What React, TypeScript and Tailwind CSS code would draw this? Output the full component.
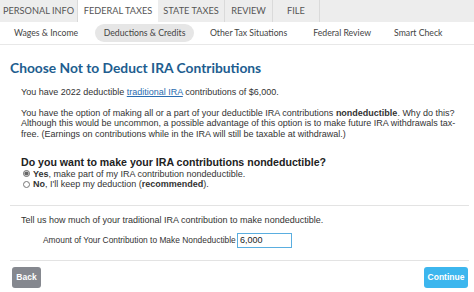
import { useState } from 'react';

const tabs = [
  { label: 'PERSONAL INFO', w: 'w-[78px]' },
  { label: 'FEDERAL TAXES', w: 'w-[80px]' },
  { label: 'STATE TAXES', w: 'w-[67px]' },
  { label: 'REVIEW', w: 'w-[48px]' },
  { label: 'FILE', w: 'w-[47px]' },
];

const subTabs = [
  { label: 'Wages & Income', cls: '' },
  { label: 'Deductions & Credits', cls: 'ml-[17px] bg-[#e6e6e6] rounded-full px-[8.5px] py-[2px]' },
  { label: 'Other Tax Situations', cls: 'ml-[16px]' },
  { label: 'Federal Review', cls: 'ml-[26px]' },
  { label: 'Smart Check', cls: 'ml-[23px]' },
];

export default function App() {
  const [choice, setChoice] = useState<'yes' | 'no'>('yes');
  const [amount, setAmount] = useState('6,000');

  return (
    <div className="w-[474px] h-[292px] bg-white overflow-hidden font-['Liberation_Sans',Arial,sans-serif] text-[#333]">
      {/* Top tabs */}
      <div className="flex h-[22px] bg-[#ededed] font-['Lato',sans-serif] text-[9.2px] text-[#555]">
        {tabs.map((tab) => (
          <div
            key={tab.label}
            className={
              tab.label === 'FEDERAL TAXES'
                ? `${tab.w} flex items-center justify-center bg-white h-[22px]`
                : `${tab.w} flex items-center justify-center border-r border-[#dadada]`
            }
          >
            {tab.label}
          </div>
        ))}
      </div>

      {/* Sub nav */}
      <div className="flex items-center h-[23px] pl-[14px] border-b border-[#e8e8e8] font-['Lato',sans-serif] text-[8.7px] text-[#444]">
        {subTabs.map((s) => (
          <span key={s.label} className={s.cls}>
            {s.label}
          </span>
        ))}
      </div>

      <div className="pl-[10px] pr-[5px] pt-[15px]">
        <h1 className="font-['Lato',sans-serif] font-bold text-[13.8px] leading-[16px] text-[#215d8f]">
          Choose Not to Deduct IRA Contributions
        </h1>

        <div className="pl-[11px] text-[9px]">
          <p className="mt-[10.5px] leading-[11px]">
            You have 2022 deductible <a className="text-[#2a6cb0] underline">traditional IRA</a> contributions of $6,000.
          </p>
          <p className="mt-[10.25px] leading-[10.5px]">
            You have the option of making all or a part of your deductible IRA contributions <b>nondeductible</b>. Why do this?
            <br />
            Although this would be uncommon, a possible advantage of this option is to make future IRA withdrawals tax-
            <br />
            free. (Earnings on contributions while in the IRA will still be taxable at withdrawal.)
          </p>

          <h2 className="font-bold text-[10.6px] leading-[13px] mt-[16.25px] text-[#222]">
            Do you want to make your IRA contributions nondeductible?
          </h2>

          <div className="pl-[2px] leading-[10.5px]">
            <label className="flex items-center gap-[3px]">
              <input
                type="radio"
                checked={choice === 'yes'}
                onChange={() => setChoice('yes')}
                className="w-[7px] h-[7px] m-0 accent-[#666]"
              />
              <span>
                <b>Yes</b>, make part of my IRA contribution nondeductible.
              </span>
            </label>
            <label className="flex items-center gap-[3px]">
              <input
                type="radio"
                checked={choice === 'no'}
                onChange={() => setChoice('no')}
                className="w-[7px] h-[7px] m-0 accent-[#666]"
              />
              <span>
                <b>No</b>, I'll keep my deduction (<b>recommended</b>).
              </span>
            </label>
          </div>
        </div>

        <div className="border-t border-[#e3e3e3] mt-[15.25px] pt-[9.5px] pl-[11px] text-[9px] leading-[11px]">
          Tell us how much of your traditional IRA contribution to make nondeductible.
          <div className="flex items-center mt-[6.5px] pl-[22px]">
            <span className="w-[194px] shrink-0 whitespace-nowrap text-[8.4px]">
              Amount of Your Contribution to Make Nondeductible
            </span>
            <input
              value={amount}
              onChange={(e) => setAmount(e.target.value)}
              className="w-[55px] shrink-0 h-[15px] border border-[#5aaee0] px-[2px] text-[9px] text-[#222] outline-none"
            />
          </div>
        </div>

        <div className="border-t border-[#e3e3e3] mt-[12px] pt-[6px] flex justify-between">
          <button className="bg-[#85888f] text-white text-[8.5px] font-bold rounded-[3px] w-[29px] h-[21px] ml-[2px]">
            Back
          </button>
          <button className="bg-[#3cb6ee] text-white text-[8.5px] font-bold rounded-[3px] w-[44px] h-[21px] mr-[1px]">
            Continue
          </button>
        </div>
      </div>
    </div>
  );
}
